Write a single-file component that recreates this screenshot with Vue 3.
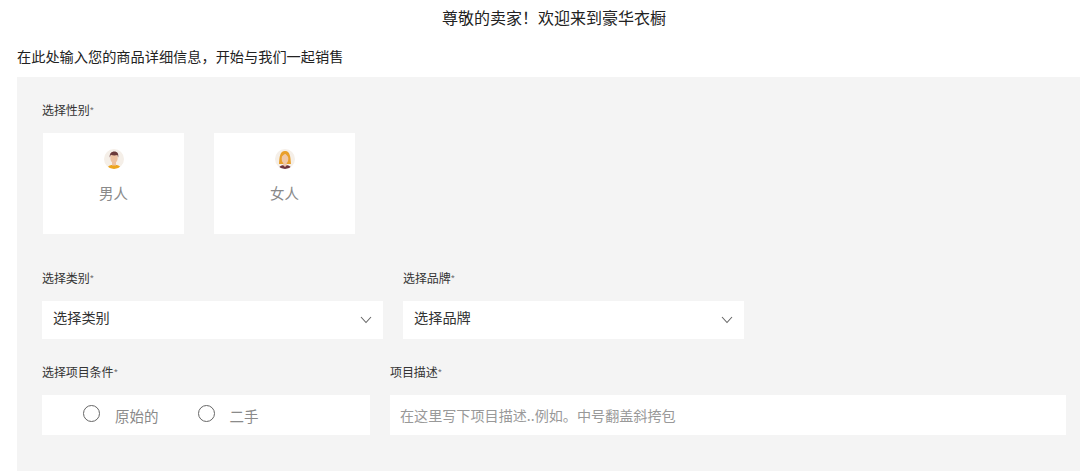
<script setup>
const genders = [
  { label: '男人', hair: '#6b3a3a', top: '#eda51e', skin: '#eec3a2' },
  { label: '女人', hair: '#e9a02c', top: '#6e3640', skin: '#f0c8a8' }
]
const selects = ['选择类别', '选择品牌']
</script>

<template>
  <div class="page">
    <h1 class="title">尊敬的卖家！欢迎来到豪华衣橱</h1>
    <p class="intro">在此处输入您的商品详细信息，开始与我们一起销售</p>
    <section class="panel">
      <div class="label">选择性别<i>*</i></div>
      <div class="genders">
        <div v-for="(g, i) in genders" :key="g.label" class="gender">
          <svg class="avatar" viewBox="0 0 20 20" width="20" height="20">
            <defs>
              <clipPath :id="'c' + i"><circle cx="10" cy="10" r="10" /></clipPath>
            </defs>
            <g :clip-path="'url(#c' + i + ')'">
              <rect width="20" height="20" fill="#f5efe8" />
              <template v-if="i === 0">
                <path d="M3 20c.5-3 3-4.200 7-4.200s6.500 1.200 7 4.200z" :fill="g.top" />
                <rect x="8" y="12" width="4" height="4.500" :fill="g.skin" />
                <ellipse cx="10" cy="9" rx="3.700" ry="5" :fill="g.skin" />
                <path d="M5.800 8.500C5.200 4.500 7.500 2.500 10.300 2.500c2.900 0 4.600 2 3.900 6l-.9-2.500c-2 .6-4.500.5-6.500-.2z" :fill="g.hair" />
              </template>
              <template v-else>
                <path d="M4 15C4.500 8 4.800 2 10 2s5.500 6 6 13z" :fill="g.hair" />
                <path d="M3.500 20c.5-3 3-4 6.500-4s6 1 6.500 4z" :fill="g.top" />
                <path d="M8.300 13h3.400v3.500L10 18l-1.700-1.500z" :fill="g.skin" />
                <ellipse cx="10" cy="9.700" rx="3.300" ry="4.600" :fill="g.skin" />
                <path d="M6.500 9C7 6.500 9 5.500 10.500 4.800c1 1.500 2.500 2.300 3 4.200l.5-4-3-2.500L7 3.500z" :fill="g.hair" />
              </template>
            </g>
          </svg>
          <span class="gender-name">{{ g.label }}</span>
        </div>
      </div>

      <div class="select-row">
        <div v-for="s in selects" :key="s" class="select-field">
          <div class="label">{{ s }}<i>*</i></div>
          <div class="select">
            <span class="select-text">{{ s }}</span>
            <svg viewBox="0 0 12 8" width="12" height="8" fill="none" stroke="#666" stroke-width="1.100">
              <path d="M1 1l5 5.500L11 1" />
            </svg>
          </div>
        </div>
      </div>

      <div class="bottom-row">
        <div class="cond">
          <div class="label">选择项目条件<i>*</i></div>
          <div class="radios">
            <span class="radio"><b></b>原始的</span>
            <span class="radio"><b></b>二手</span>
          </div>
        </div>
        <div class="desc">
          <div class="label">项目描述<i>*</i></div>
          <div class="desc-input">在这里写下项目描述..例如。中号翻盖斜挎包</div>
        </div>
      </div>
    </section>
  </div>
</template>

<style scoped>
.page {
  width: 1080px;
  height: 471px;
  overflow: hidden;
  background: #fff;
  font-family: "Noto Sans CJK SC", "Liberation Sans", sans-serif;
  color: #333;
}
.title {
  margin: 0;
  padding: 6px 0 0 28px;
  height: 23px;
  line-height: 23px;
  text-align: center;
  font-size: 16px;
  font-weight: 400;
  color: #222;
}
.intro {
  margin: 0;
  padding: 17px 0 0 17px;
  height: 31px;
  line-height: 20px;
  font-size: 14.200px;
  color: #222;
}
.panel {
  margin-left: 17px;
  height: 394px;
  background: #f4f4f4;
  padding: 25px 0 0 25px;
  box-sizing: border-box;
}
.label {
  font-size: 12px;
  line-height: 16px;
  height: 16px;
  color: #333;
  letter-spacing: -0.100px;
}
.label i {
  font-style: normal;
  font-size: 10px;
  color: #777;
}
.genders {
  display: flex;
  gap: 30px;
  margin-top: 15px;
  padding-left: 1px;
}
.gender {
  width: 141px;
  height: 101px;
  background: #fff;
  display: flex;
  flex-direction: column;
  align-items: center;
  padding-top: 16px;
  box-sizing: border-box;
}
.gender-name {
  margin-top: 14px;
  font-size: 14.500px;
  line-height: 20px;
  color: #8a8a8a;
}
.select-row {
  display: flex;
  gap: 20px;
  margin-top: 36px;
}
.select-field {
  width: 341px;
}
.select {
  margin-top: 15px;
  height: 38px;
  background: #fff;
  display: flex;
  align-items: center;
  justify-content: space-between;
  padding: 0 11px;
  box-sizing: border-box;
  font-size: 14.200px;
  color: #333;
}
.select-text {
  margin-bottom: 6px;
}
.bottom-row {
  display: flex;
  gap: 20px;
  margin-top: 25px;
}
.cond {
  width: 328px;
}
.radios {
  margin-top: 15px;
  height: 40px;
  background: #fff;
  display: flex;
  align-items: center;
  padding-left: 41px;
  gap: 39px;
  font-size: 14.500px;
  color: #8a8a8a;
}
.radio {
  display: flex;
  align-items: center;
  gap: 15px;
}
.radio b {
  width: 17px;
  height: 17px;
  box-sizing: border-box;
  border: 1.500px solid #666;
  border-radius: 50%;
  background: #fff;
  margin-top: -4px;
}
.desc {
  width: 676px;
}
.desc-input {
  margin-top: 15px;
  height: 40px;
  line-height: 41px;
  background: #fff;
  padding-left: 10px;
  font-size: 14.100px;
  color: #999;
}
</style>
